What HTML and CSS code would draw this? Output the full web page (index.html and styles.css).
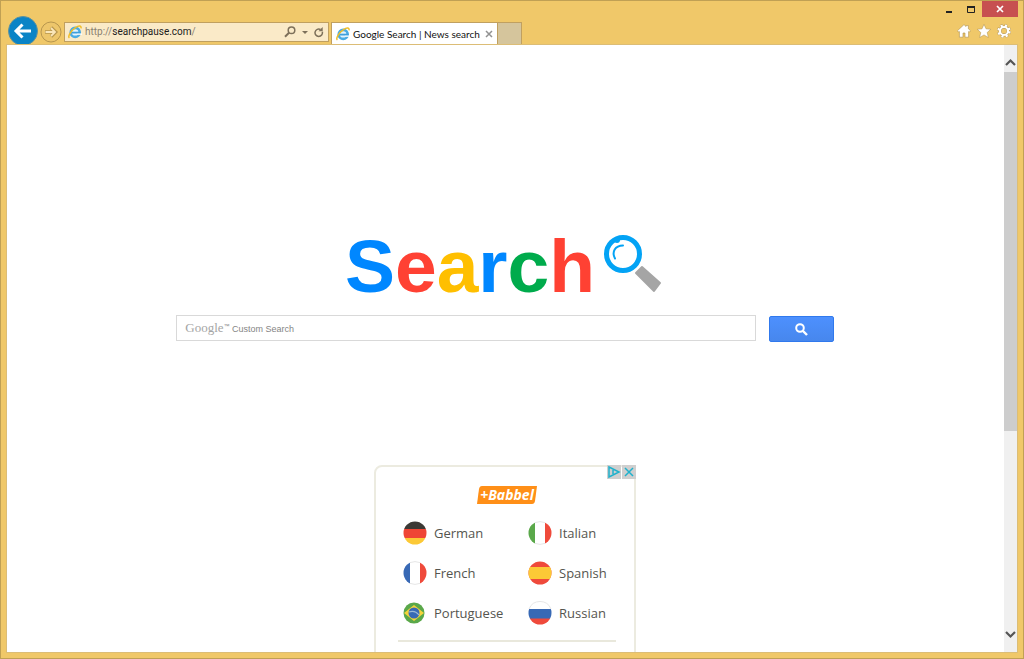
FILE: index.html
```html
<!DOCTYPE html>
<html lang="en">
<head>
<meta charset="utf-8">
<title>Google Search | News search</title>
<link rel="stylesheet" href="styles.css">
</head>
<body>
<svg class="defs" aria-hidden="true">
  <symbol id="ie" viewBox="0 0 14 14">
    <circle cx="7.2" cy="7.4" r="4.500" fill="#e4f4fd" stroke="#4aabe3" stroke-width="2.600"/>
    <path d="M4 7.600h8.400" stroke="#3f9fdc" stroke-width="1.800"/>
    <path d="M9.500 9.800h5V8.500h-5z" fill="#fff"/>
    <path d="M1.400 13C-.6 11.600 3 5.500 7.500 2.600 10.500.6 13.600.3 13 3.400" fill="none" stroke="#efbd27" stroke-width="1.500"/>
  </symbol>
</svg>
<div class="window">
  <header class="chrome">
    <nav class="toolbar">
      <button class="nav back" aria-label="Back"><svg width="30" height="30" viewBox="0 0 30 30"><circle cx="15" cy="15" r="14.500" fill="#0a84c6" stroke="#5b91a0"/><path d="M23 15H9M14.500 8.500L8 15l6.500 6.500" fill="none" stroke="#fff" stroke-width="3"/></svg></button>
      <button class="nav forward" aria-label="Forward"><svg width="22" height="22" viewBox="0 0 22 22"><circle cx="11" cy="11" r="10" fill="#edc66b" stroke="#b7964e"/><path d="M5 11h10M11 6.500l4.500 4.500-4.500 4.500" fill="none" stroke="#b7964e" stroke-width="3.600"/><path d="M5.500 11h9M11 7l4 4-4 4" fill="none" stroke="#fae6b8" stroke-width="1.800"/></svg></button>
      <div class="address">
        <svg class="ie" width="14" height="14"><use href="#ie"/></svg>
        <a class="url" href="#">http://<span class="domain">searchpause.com</span>/</a>
        <button aria-label="Search"><svg width="12" height="12" viewBox="0 0 12 12" fill="none" stroke="#7d705a" stroke-width="1.500"><circle cx="7.500" cy="4.300" r="3.300"/><path d="M5 6.800L1 10.800" stroke-width="2"/></svg></button>
        <button aria-label="Recent addresses"><svg width="6" height="12" viewBox="0 0 6 12"><path d="M0 5h6L3 8z" fill="#7d705a"/></svg></button>
        <button class="reload" aria-label="Reload"><svg width="10" height="12" viewBox="0 0 10 12"><path d="M8.300 5.800A3.700 3.700 0 1 1 6.500 3.500" fill="none" stroke="#7d705a" stroke-width="1.500"/><path d="M4.500 5.200h4.200V1z" fill="#7d705a"/></svg></button>
      </div>
      <div class="tab">
        <svg class="ie" width="14" height="14"><use href="#ie"/></svg>
        <span class="tab-title">Google Search | News search</span>
        <button aria-label="Close tab"><svg width="8" height="8" viewBox="0 0 8 8"><path d="M1 1l6 6M7 1L1 7" stroke="#929292" stroke-width="1.500"/></svg></button>
      </div>
      <button class="new-tab" aria-label="New tab"></button>
    </nav>
    <div class="corner">
      <div class="controls">
        <button aria-label="Minimize"><svg width="12" height="12" viewBox="0 0 12 12"><path d="M3 9h6" stroke="#222" stroke-width="2"/></svg></button>
        <button aria-label="Maximize"><svg width="12" height="12" viewBox="0 0 12 12"><path d="M2.500 4v5.500h7V4" fill="none" stroke="#222"/><path d="M2 4h8" stroke="#222" stroke-width="2"/></svg></button>
        <button class="close" aria-label="Close"><svg width="8" height="8" viewBox="0 0 8 8"><path d="M1 1l6 6M7 1L1 7" stroke="#fff" stroke-width="1.700"/></svg></button>
      </div>
      <div class="tools">
        <button aria-label="Home"><svg width="14" height="14" viewBox="0 0 14 14"><path d="M7 .6L.4 6.800l1.300 1.300.7-.6v5.700h3.600V9h2v4.200h3.600V7.500l.7.6 1.300-1.300-2.200-2V1.600H9v.9z" fill="#fff" stroke="#ad8e4c" stroke-width=".6"/></svg></button>
        <button aria-label="Favorites"><svg width="14" height="14" viewBox="0 0 14 14"><path d="M7 .3l2 4.500 4.800.5-3.600 3.200 1.200 5L7 10.900l-4.400 2.600 1.200-5L.2 5.300 5 4.800z" fill="#fff" stroke="#ad8e4c" stroke-width=".5"/></svg></button>
        <button aria-label="Tools"><svg width="14" height="14" viewBox="0 0 14 14"><g fill="none"><circle cx="7" cy="7" r="5.300" stroke="#ad8e4c" stroke-width="3.400" stroke-dasharray="2.500 1.663"/><circle cx="7" cy="7" r="4" stroke="#ad8e4c" stroke-width="3"/><circle cx="7" cy="7" r="5.300" stroke="#fff" stroke-width="2.800" stroke-dasharray="2.100 2.063" stroke-dashoffset="-.2"/><circle cx="7" cy="7" r="4" stroke="#fff" stroke-width="2.200"/></g></svg></button>
      </div>
    </div>
  </header>
  <div class="viewport">
    <main class="page">
      <h1 class="logo">
        <span><span class="blue">S</span><span class="red">e</span><span class="yellow">a</span><span class="blue">r</span><span class="green">c</span><span class="red">h</span></span>
        <svg width="64" height="64" viewBox="-1 0 64 64" aria-hidden="true"><circle cx="21" cy="20" r="16.500" fill="none" stroke="#03a3f5" stroke-width="5"/><circle cx="15" cy="6" r="3" fill="#03a3f5"/><path d="M13 24.500C9.500 18 13 11.500 21 11.500" fill="none" stroke="#03a3f5" stroke-width="2" stroke-linecap="round"/><path d="M34 39l6-6 18 16-6 8z" fill="#a5a5a5" stroke="#a5a5a5" stroke-width="2" stroke-linejoin="round"/></svg>
      </h1>
      <form class="search">
        <div class="field">
          <input id="q" type="text">
          <label for="q"><span class="google">Google</span><span class="tm">™</span> Custom Search</label>
        </div>
        <button type="button" aria-label="Search"><svg width="13" height="13" viewBox="0 0 13 13" fill="none" stroke="#fff"><circle cx="5" cy="5" r="3.800" stroke-width="2"/><path d="M8 8l4 4" stroke-width="2.400"/></svg></button>
      </form>
      <section class="ad">
        <div class="ad-controls">
          <button aria-label="Ad choices"><svg width="14" height="14" viewBox="0 0 14 14"><path d="M2 2l10 5-10 5zM6 5v4" fill="none" stroke="#20b1cc" stroke-width="1.500"/></svg></button>
          <button aria-label="Close ad"><svg width="14" height="14" viewBox="0 0 14 14"><path d="M3 3l8 8M11 3l-8 8" stroke="#20b1cc" stroke-width="1.500"/></svg></button>
        </div>
        <a class="babbel" href="#"><svg width="60" height="20" viewBox="0 0 60 20" aria-hidden="true"><path d="M5 1h55l-2 15q-.5 3-3 3H0L2 4q.5-3 3-3z" fill="#ff8f17"/></svg><span>+Babbel</span></a>
        <ul class="languages">
          <li><svg class="flag" viewBox="0 0 24 24"><clipPath id="c"><circle cx="12" cy="12" r="11.500"/></clipPath><g clip-path="url(#c)"><path d="M0 0h24v8H0z" fill="#3b3935"/><path d="M0 8h24v9H0z" fill="#ef4535"/><path d="M0 17h24v7H0z" fill="#fcc936"/></g></svg>German</li>
          <li><svg class="flag" viewBox="0 0 24 24"><g clip-path="url(#c)"><path d="M0 0h24v24H0z" fill="#fff"/><path d="M0 0h7v24H0z" fill="#5aa84a"/><path d="M17 0h7v24h-7z" fill="#ef4a3b"/></g><path class="rim" d="M7 1.600q5-2 10 0M7 22.400q5 2 10 0"/></svg>Italian</li>
          <li><svg class="flag" viewBox="0 0 24 24"><g clip-path="url(#c)"><path d="M0 0h24v24H0z" fill="#fff"/><path d="M0 0h7v24H0z" fill="#3869b5"/><path d="M17 0h7v24h-7z" fill="#ef4a3b"/></g><path class="rim" d="M7 1.600q5-2 10 0M7 22.400q5 2 10 0"/></svg>French</li>
          <li><svg class="flag" viewBox="0 0 24 24"><g clip-path="url(#c)"><path d="M0 0h24v24H0z" fill="#ef4a3b"/><path d="M0 6h24v12H0z" fill="#fcc936"/></g></svg>Spanish</li>
          <li><svg class="flag" viewBox="0 0 24 24"><circle cx="11" cy="12" r="10.500" fill="#5aa84a"/><path d="M1 12l10-8 10 8-10 8z" fill="#f5d33b"/><circle cx="11" cy="12" r="5.500" fill="#3869b5"/><path d="M6 11q6-2 10 3" fill="none" stroke="#9db9d8" stroke-width="1.200"/></svg>Portuguese</li>
          <li><svg class="flag" viewBox="0 0 24 24"><g clip-path="url(#c)"><path d="M0 0h24v8H0z" fill="#fff"/><path d="M0 8h24v10H0z" fill="#3869b5"/><path d="M0 17.500h24V24H0z" fill="#ef4a3b"/></g><path class="rim" d="M1 8Q4 .5 12 .5T23 8"/></svg>Russian</li>
        </ul>
        <hr>
      </section>
    </main>
    <div class="scrollbar">
      <button class="up" aria-label="Scroll up"><svg width="11" height="9" viewBox="0 0 11 9"><path d="M1 7l4.500-4.500L10 7" fill="none" stroke="#555" stroke-width="2.200"/></svg></button>
      <div class="track"><div class="thumb"></div></div>
      <button class="down" aria-label="Scroll down"><svg width="11" height="9" viewBox="0 0 11 9"><path d="M1 2l4.500 4.500L10 2" fill="none" stroke="#555" stroke-width="2.200"/></svg></button>
    </div>
  </div>
</div>
</body>
</html>
```
FILE: styles.css
```css
* { box-sizing: border-box; }
body { margin: 0; font-family: "Open Sans", "Noto Sans", sans-serif; }
button { margin: 0; padding: 0; border: 0; background: none; display: flex; align-items: center; justify-content: center; }
svg { display: block; flex: none; }
a { color: inherit; text-decoration: none; }
.defs { position: absolute; width: 0; height: 0; }

.window {
  height: 100vh;
  display: flex;
  flex-direction: column;
  padding: 0 5px 5px;
  background: #f0c869;
  border: 1px solid #c0a054;
}
.chrome { display: flex; justify-content: space-between; height: 43px; flex: none; }
.toolbar { display: flex; align-items: flex-end; flex: 1; min-width: 0; padding-left: 2px; }
.nav { flex: none; }
.back { height: 28px; width: 30px; align-items: flex-start; overflow: hidden; }
.forward { margin: 0 2px 1px; }
.address {
  display: flex;
  align-items: center;
  flex: 0 1 265px;
  height: 20px;
  margin: 0 2px 2px 0;
  padding: 0 4px 0 3px;
  background: #faeac8;
  border: 1px solid #c0a060;
}
.url { flex: 1; margin-left: 3px; font: 10px/16px Roboto, "Open Sans", sans-serif; color: #8a8171; white-space: nowrap; }
.domain { color: #1c1c1c; }
.address button { margin-left: 6px; }
.tab {
  display: flex;
  align-items: center;
  height: 22px;
  padding: 0 4px;
  background: #fff;
  border: 1px solid #c0a060;
  border-bottom: 0;
}
.tab-title { margin: 0 5px 0 3px; font: 10px/16px Lato, "Open Sans", sans-serif; color: #111; white-space: nowrap; }
.new-tab { width: 24px; height: 22px; background: #d5c59c; border: solid #c0a060; border-width: 1px 1px 0 0; }

.corner { display: flex; flex-direction: column; justify-content: space-between; }
.controls { display: flex; justify-content: flex-end; gap: 10px; }
.controls button { height: 16px; }
.controls .close { width: 36px; background: #c75050; margin-left: -5px; }
.tools { display: flex; justify-content: flex-end; gap: 6px; padding: 0 7px 6px 0; }

.viewport { display: flex; flex: 1; min-height: 0; border: 1px solid #dcbd76; background: #fff; }
.page { flex: 1; min-width: 0; display: flex; flex-direction: column; align-items: center; padding-right: 1px; overflow: hidden; }
.logo {
  display: flex;
  align-items: center;
  gap: 6px;
  margin: 183px 0 11px;
  font: bold 75px/76px "Liberation Sans", Arial, sans-serif;
}
.blue { color: #0087ff; }
.red { color: #ff4133; }
.yellow { color: #ffbf00; }
.green { color: #00ab4c; }

.search { display: flex; gap: 13px; width: 66%; flex: none; }
.field { flex: 1; position: relative; }
.field input { display: block; width: 100%; height: 26px; border: 1px solid #d9d9d9; padding: 0 8px; background: #fff; }
.field label {
  position: absolute;
  left: 9px;
  top: 3px;
  font: 9px/16px "Liberation Sans", Arial, sans-serif;
  color: #858585;
  pointer-events: none;
}
.google { font: 13px/16px "Liberation Serif", serif; color: #a5a5a5; }
.tm { font-size: 6px; vertical-align: 4px; }
.search button { width: 65px; height: 26px; margin-top: 1px; background: linear-gradient(#4d90fe, #4787ed); border: 1px solid #3079ed; border-radius: 2px; }

.ad {
  position: relative;
  flex: none;
  width: 262px;
  height: 250px;
  margin-top: 123px;
  padding: 20px 18px 0 22px;
  border: 2px solid #ecebe0;
  border-radius: 8px 0 0 0;
}
.ad-controls { position: absolute; top: -2px; right: -2px; display: flex; gap: 1px; }
.ad-controls button { background: #cfcfcf; }
.babbel { position: relative; display: block; width: 60px; margin: -2px auto 0; }
.babbel span { position: absolute; inset: 0; text-align: center; color: #fff; font: italic bold 14px/20px "Open Sans", sans-serif; }
.languages {
  display: grid;
  grid-template-columns: 125px 1fr;
  row-gap: 16px;
  margin: 16px 0 0;
  padding: 0 0 0 5px;
  list-style: none;
}
.languages li { display: flex; align-items: center; gap: 7px; height: 24px; font-size: 13px; color: #55554f; }
.flag { width: 24px; height: 24px; }
.rim { fill: none; stroke: #e6e6e6; }
.ad hr { height: 2px; margin: 15px 0 0; border: 0; background: #e9e8dc; }

.scrollbar { display: flex; flex-direction: column; width: 13px; background: #f0f0f0; }
.scrollbar button { height: 27px; }
.scrollbar .up { padding-top: 7px; }
.scrollbar .down { padding-bottom: 8px; }
.track { flex: 1; }
.thumb { height: 65%; background: #cdcdcd; }
```
